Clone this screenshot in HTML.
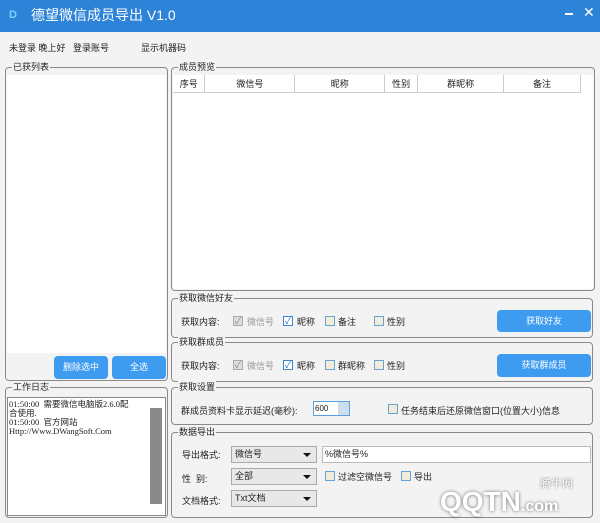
<!DOCTYPE html><html><head><meta charset="utf-8"><style>
*{box-sizing:border-box;margin:0;padding:0}
body{width:600px;height:522px;background:#f3f3f3;font-family:"Liberation Sans","Noto Sans CJK SC",sans-serif;font-size:9px;color:#222;position:relative;overflow:hidden}
.a{position:absolute}
.g{position:absolute;border:1px solid #8a8a8a;border-radius:4px}
.gt{position:absolute;top:-7px;left:6px;background:#f3f3f3;padding:0 1px;font-size:9px;line-height:12px}
.btn{position:absolute;background:#3d9bf0;border-radius:4px;color:#fff;text-align:center;font-size:9px}
.cb{position:absolute;width:10px;height:10px;border:1px solid #6aa0d8;background:#f3ecd8;font-size:9px;line-height:8px;text-align:center;color:#2a6fc0}
.cbk{background:#fff;border-color:#3a86d6}
.cbg{background:#ddd;border-color:#aaa;color:#888}
.sel{position:absolute;background:#e8e8e8;border:1px solid #aaa;font-size:9px;padding-left:3px;line-height:15px}
.sel:after{content:"";position:absolute;right:5px;top:6px;border:4px solid transparent;border-top-color:#111;border-bottom:0}
th{font-weight:normal;border-right:1px solid #ccc;border-bottom:1px solid #ccc;height:17px;font-size:9px}
</style></head><body>
<div class="a" style="left:0;top:0;width:600px;height:32px;background:#2d83d8"></div>
<div class="a" style="left:9px;top:9px;width:12px;height:13px;color:#7fd0ff;font-size:11px;font-weight:bold;line-height:13px">D</div>
<div class="a" style="left:31px;top:6px;color:#fff;font-size:14px;line-height:18px">德望微信成员导出 V1.0</div>
<div class="a" style="left:565px;top:13px;width:8px;height:2px;background:#fff"></div>
<div class="a" style="left:583px;top:4px;color:#fff;font-size:14px">✕</div>
<div class="a" style="left:9px;top:41px">未登录 晚上好</div>
<div class="a" style="left:73px;top:41px">登录账号</div>
<div class="a" style="left:141px;top:41px">显示机器码</div>

<div class="g" style="left:5px;top:67px;width:163px;height:314px"><span class="gt">已获列表</span></div>
<div class="a" style="left:7px;top:75px;width:159px;height:278px;background:#fff"></div>
<div class="btn" style="left:54px;top:356px;width:54px;height:23px;line-height:23px">删除选中</div>
<div class="btn" style="left:112px;top:356px;width:54px;height:23px;line-height:23px">全选</div>

<div class="g" style="left:5px;top:387px;width:163px;height:131px"><span class="gt">工作日志</span></div>
<div class="a" style="left:7px;top:397px;width:159px;height:119px;background:#fff;border:1px solid #888;font-family:'Liberation Serif','Noto Sans CJK SC',serif;font-size:8.5px;line-height:9px;padding:2px 0 0 1px">01:50:00 &nbsp;需要微信电脑版2.6.0配<br>合使用.<br>01:50:00 &nbsp;官方网站<br>Http://Www.DWangSoft.Com</div>
<div class="a" style="left:150px;top:408px;width:12px;height:96px;background:#8a8a8a"></div>

<div class="g" style="left:171px;top:67px;width:424px;height:224px"><span class="gt">成员预览</span></div>
<div class="a" style="left:173px;top:75px;width:420px;height:214px;background:#fff">
<table style="border-collapse:collapse;width:408px"><tr><th style="width:32px">序号</th><th style="width:90px">微信号</th><th style="width:90px">昵称</th><th style="width:33px">性别</th><th style="width:86px">群昵称</th><th style="width:77px">备注</th></tr></table></div>

<div class="g" style="left:171px;top:298px;width:422px;height:40px"><span class="gt">获取微信好友</span></div>
<div class="a" style="left:181px;top:315px">获取内容:</div>
<div class="cb cbg" style="left:233px;top:316px">✓</div><div class="a" style="left:247px;top:315px;color:#999">微信号</div>
<div class="cb cbk" style="left:283px;top:316px">✓</div><div class="a" style="left:297px;top:315px">昵称</div>
<div class="cb" style="left:325px;top:316px"></div><div class="a" style="left:338px;top:315px">备注</div>
<div class="cb" style="left:374px;top:316px"></div><div class="a" style="left:387px;top:315px">性别</div>
<div class="btn" style="left:497px;top:310px;width:94px;height:22px;line-height:22px">获取好友</div>

<div class="g" style="left:171px;top:342px;width:422px;height:40px"><span class="gt">获取群成员</span></div>
<div class="a" style="left:181px;top:359px">获取内容:</div>
<div class="cb cbg" style="left:233px;top:360px">✓</div><div class="a" style="left:247px;top:359px;color:#999">微信号</div>
<div class="cb cbk" style="left:283px;top:360px">✓</div><div class="a" style="left:297px;top:359px">昵称</div>
<div class="cb" style="left:325px;top:360px"></div><div class="a" style="left:338px;top:359px">群昵称</div>
<div class="cb" style="left:374px;top:360px"></div><div class="a" style="left:387px;top:359px">性别</div>
<div class="btn" style="left:497px;top:354px;width:94px;height:23px;line-height:23px">获取群成员</div>

<div class="g" style="left:171px;top:387px;width:422px;height:38px"><span class="gt">获取设置</span></div>
<div class="a" style="left:181px;top:404px">群成员资料卡显示延迟(毫秒):</div>
<div class="a" style="left:313px;top:401px;width:37px;height:15px;border:1px solid #5aa0e0;background:#fff;font-size:8px;line-height:13px;padding-left:1px">600</div>
<div class="a" style="left:338px;top:402px;width:11px;height:13px;background:#cde"></div>
<div class="cb" style="left:388px;top:404px"></div><div class="a" style="left:401px;top:404px">任务结束后还原微信窗口(位置大小)信息</div>

<div class="g" style="left:171px;top:432px;width:422px;height:86px"><span class="gt">数据导出</span></div>
<div class="a" style="left:440px;top:486px;color:#fff;font-size:28px;font-weight:bold;text-shadow:0 0 3px #666;line-height:32px;font-family:'Liberation Sans',sans-serif">QQTN<span style="font-size:16px">.com</span></div>
<div class="a" style="left:540px;top:475px;color:#fff;font-size:11px;text-shadow:0 0 2px #666">腾牛网</div>
<div class="a" style="left:182px;top:448px">导出格式:</div>
<div class="sel" style="left:231px;top:446px;width:86px;height:17px">微信号</div>
<div class="a" style="left:322px;top:446px;width:269px;height:17px;background:#fff;border:1px solid #bbb;font-size:9px;line-height:15px;padding-left:2px">%微信号%</div>
<div class="a" style="left:182px;top:472px">性 &nbsp;别:</div>
<div class="sel" style="left:231px;top:468px;width:86px;height:17px">全部</div>
<div class="cb" style="left:325px;top:471px"></div><div class="a" style="left:338px;top:470px">过滤空微信号</div>
<div class="cb" style="left:401px;top:471px"></div><div class="a" style="left:414px;top:470px">导出</div>
<div class="a" style="left:182px;top:494px">文档格式:</div>
<div class="sel" style="left:231px;top:490px;width:86px;height:17px">Txt文档</div>
</body></html>
